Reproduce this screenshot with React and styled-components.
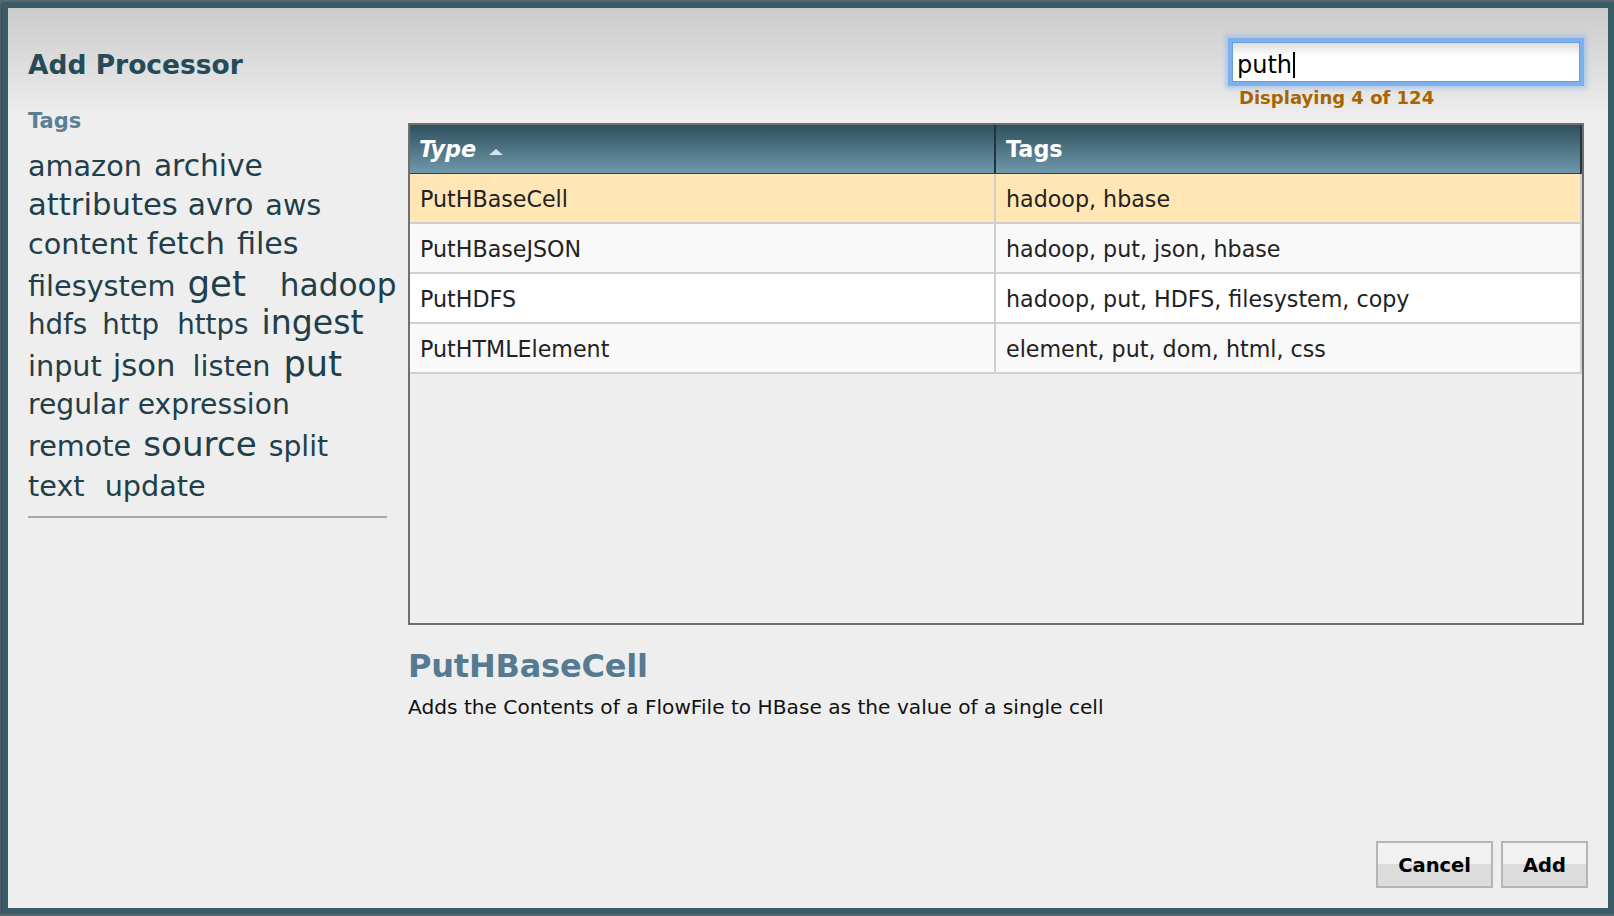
import React from 'react';
import styled, { createGlobalStyle } from 'styled-components';

const GlobalStyle = createGlobalStyle`
  html, body {
    margin: 0;
    padding: 0;
  }
  body {
    background: #56676e;
    font-family: "DejaVu Sans", Verdana, sans-serif;
    overflow: hidden;
  }
`;

const Dialog = styled.div`
  box-sizing: border-box;
  width: 1612px;
  height: 912px;
  margin: 2px 0 0 2px;
  border: 6px solid #3a5b68;
  background: linear-gradient(to bottom, #cbcbcb 0, #eeeeee 110px) #eeeeee;
  box-shadow: 0 2px 2px rgba(0, 0, 0, 0.85);
  display: flex;
  flex-direction: column;
  padding: 0 20px 20px 20px;
`;

const Header = styled.div`
  display: flex;
  justify-content: space-between;
  align-items: flex-start;
  height: 100px;
  flex: none;
  padding-right: 8px;
`;

const Title = styled.h1`
  margin: 41px 0 0;
  font-size: 26.5px;
  line-height: 32px;
  font-weight: bold;
  color: #264b58;
`;

const Search = styled.div`
  margin-top: 34px;
  width: 348px;
`;

const SearchBox = styled.div`
  box-sizing: border-box;
  width: 348px;
  height: 40px;
  border: 1px solid #6a9ddb;
  box-shadow: 0 0 0 4px #7fb0ee, 0 0 4px 7px rgba(127, 176, 238, 0.45);
  background: linear-gradient(#dcdcdc, #ffffff 13px);
  padding: 8px 4px 2px;
  font-size: 24px;
  line-height: 28px;
  color: #000;
  white-space: nowrap;
`;

const Caret = styled.span`
  display: inline-block;
  width: 2px;
  height: 26px;
  margin-left: 1px;
  background: #000;
  vertical-align: -5px;
`;

const Count = styled.div`
  margin-top: 5px;
  padding-left: 7px;
  font-size: 18px;
  line-height: 22px;
  font-weight: bold;
  color: #a86400;
`;

const Body = styled.div`
  display: flex;
  gap: 21px;
  flex: 1;
  min-height: 0;
  padding-right: 4px;
`;

const Sidebar = styled.div`
  width: 359px;
  flex: none;
`;

const SideLabel = styled.div`
  margin-top: 1px;
  font-size: 21px;
  line-height: 24px;
  font-weight: bold;
  color: #5b7f95;
`;

const Cloud = styled.div`
  margin-top: 17.6px;
  color: #213e49;
`;

const CloudRow = styled.div`
  display: flex;
  align-items: baseline;
  height: ${({ $h }) => $h}px;
`;

const Tag = styled.span`
  font-size: ${({ $size }) => $size}px;
  line-height: 1;
  margin-left: ${({ $ml }) => $ml || 0}px;
  white-space: nowrap;
`;

const Divider = styled.div`
  margin-top: 16px;
  height: 2px;
  background: #a9a9a9;
`;

const Main = styled.div`
  flex: 1;
  padding-top: 15px;
  min-width: 0;
`;

const Table = styled.div`
  box-sizing: border-box;
  height: 502px;
  border: 2px solid #6f6f6f;
  background: #eeeeee;
`;

const HeadRow = styled.div`
  display: grid;
  grid-template-columns: 586px 586px;
  height: 48px;
  border-bottom: 1px solid #23404c;
  background: linear-gradient(#2f505e, #6f98ab);
`;

const HeadCell = styled.div`
  box-sizing: border-box;
  padding-left: ${({ $pad }) => $pad}px;
  border-right: 2px solid #1d3640;
  color: #fff;
  font-size: 22.3px;
  line-height: 48px;
  font-weight: bold;
  font-style: ${({ $italic }) => ($italic ? 'italic' : 'normal')};
  white-space: nowrap;
`;

const SortArrow = styled.svg`
  margin-left: 13px;
  vertical-align: 2px;
`;

const Row = styled.div`
  display: grid;
  grid-template-columns: 586px 586px;
  height: 48px;
  border-bottom: 2px solid #cfcfcf;
  background: ${({ $selected, $alt }) =>
    $selected ? '#ffe6b4' : $alt ? '#f9f9f9' : '#ffffff'};
`;

const Cell = styled.div`
  box-sizing: border-box;
  padding: 1px 0 0 ${({ $pad }) => $pad}px;
  border-right: 2px solid #cfcfcf;
  font-size: 22.2px;
  line-height: 48px;
  color: #222;
  white-space: nowrap;
  overflow: hidden;
`;

const DetailTitle = styled.h2`
  margin: 21px 0 0;
  font-size: 32px;
  line-height: 40px;
  font-weight: bold;
  letter-spacing: -0.2px;
  color: #557a92;
`;

const DetailText = styled.p`
  margin: 9px 0 0;
  font-size: 20.15px;
  line-height: 24px;
  color: #111;
`;

const Footer = styled.div`
  display: flex;
  justify-content: flex-end;
  gap: 8px;
  flex: none;
`;

const Button = styled.button`
  box-sizing: border-box;
  height: 47px;
  padding: 1px 20px 0;
  border: 2px solid #b5b5b5;
  border-radius: 0;
  background: linear-gradient(#f1f1f1 50%, #dcdcdc 50%);
  font-family: "DejaVu Sans", Verdana, sans-serif;
  font-size: 19.5px;
  font-weight: bold;
  color: #000;
`;

const cloud = [
  { h: 39.2, tags: [['amazon', 28.7], ['archive', 29.7, 12]] },
  { h: 39, tags: [['attributes', 30.7], ['avro', 29.7, 10], ['aws', 28.7, 12]] },
  { h: 37.7, tags: [['content', 28.7], ['fetch', 30.7, 9], ['files', 30.2, 12]] },
  { h: 39.2, tags: [['filesystem', 28.7], ['get', 35.6, 12], ['hadoop', 31.2, 34]] },
  { h: 40.3, tags: [['hdfs', 27.7], ['http', 27.7, 15], ['https', 27.7, 18], ['ingest', 33.2, 13]] },
  { h: 44.9, tags: [['input', 28.7], ['json', 30.7, 11], ['listen', 28.7, 17], ['put', 35.2, 13]] },
  { h: 35.9, tags: [['regular expression', 28.2]] },
  { h: 45.7, tags: [['remote', 28.7], ['source', 34.2, 12], ['split', 28.2, 12]] },
  { h: 28, tags: [['text', 28.7], ['update', 28.7, 20]] },
];

const processors = [
  { type: 'PutHBaseCell', tags: 'hadoop, hbase' },
  { type: 'PutHBaseJSON', tags: 'hadoop, put, json, hbase' },
  { type: 'PutHDFS', tags: 'hadoop, put, HDFS, filesystem, copy' },
  { type: 'PutHTMLElement', tags: 'element, put, dom, html, css' },
];

const App = () => {
  const selected = processors[0];

  return (
    <>
      <GlobalStyle />
      <Dialog>
        <Header>
          <Title>Add Processor</Title>
          <Search>
            <SearchBox>
              puth<Caret />
            </SearchBox>
            <Count>Displaying 4 of 124</Count>
          </Search>
        </Header>

        <Body>
          <Sidebar>
            <SideLabel>Tags</SideLabel>
            <Cloud>
              {cloud.map((row, i) => (
                <CloudRow key={i} $h={row.h}>
                  {row.tags.map(([name, size, ml]) => (
                    <Tag key={name} $size={size} $ml={ml}>{name}</Tag>
                  ))}
                </CloudRow>
              ))}
            </Cloud>
            <Divider />
          </Sidebar>

          <Main>
            <Table>
              <HeadRow>
                <HeadCell $pad={9} $italic>
                  Type
                  <SortArrow width="14" height="6" viewBox="0 0 14 6">
                    <polygon points="0,6 7,0 14,6" fill="#d3e3ec" />
                  </SortArrow>
                </HeadCell>
                <HeadCell $pad={10}>Tags</HeadCell>
              </HeadRow>
              {processors.map((p, i) => (
                <Row key={p.type} $selected={p === selected} $alt={i % 2 === 1}>
                  <Cell $pad={10}>{p.type}</Cell>
                  <Cell $pad={10}>{p.tags}</Cell>
                </Row>
              ))}
            </Table>
            <DetailTitle>{selected.type}</DetailTitle>
            <DetailText>Adds the Contents of a FlowFile to HBase as the value of a single cell</DetailText>
          </Main>
        </Body>

        <Footer>
          <Button>Cancel</Button>
          <Button>Add</Button>
        </Footer>
      </Dialog>
    </>
  );
};

export default App;
